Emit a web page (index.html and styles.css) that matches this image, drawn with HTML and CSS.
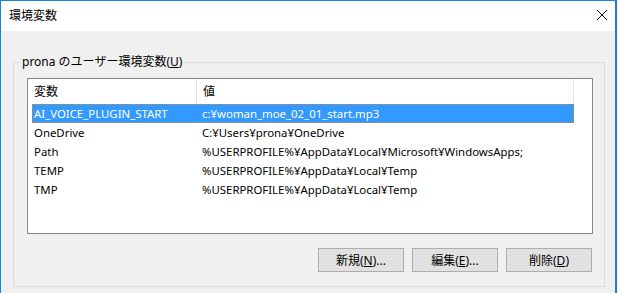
FILE: index.html
```html
<!DOCTYPE html>
<html lang="ja">
  <head>
    <meta charset="UTF-8" />
    <meta name="viewport" content="width=device-width, initial-scale=1.0" />
    <title>環境変数</title>
    <link rel="stylesheet" href="styles.css">
  </head>
  <body>
    <div class="window">
      <header class="titlebar">
        <span class="title">環境変数</span>
        <button class="close" aria-label="閉じる">
          <svg width="10" height="10" viewBox="0 0 10 10">
            <path d="M0 0 L10 10 M10 0 L0 10" stroke="#000" stroke-width="1" fill="none" />
          </svg>
        </button>
      </header>
      <main class="content">
        <fieldset class="group">
          <legend>prona のユーザー環境変数(<u>U</u>)</legend>
          <div class="listview">
            <div class="lv-header">
              <div class="hcol hcol-name">変数</div>
              <div class="hcol hcol-value">値</div>
            </div>
            <div class="lv-row selected">
              <span class="cell-name">AI_VOICE_PLUGIN_START</span>
              <span class="cell-value">c:¥woman_moe_02_01_start.mp3</span>
            </div>
            <div class="lv-row">
              <span class="cell-name">OneDrive</span>
              <span class="cell-value">C:¥Users¥prona¥OneDrive</span>
            </div>
            <div class="lv-row">
              <span class="cell-name">Path</span>
              <span class="cell-value">%USERPROFILE%¥AppData¥Local¥Microsoft¥WindowsApps;</span>
            </div>
            <div class="lv-row">
              <span class="cell-name">TEMP</span>
              <span class="cell-value">%USERPROFILE%¥AppData¥Local¥Temp</span>
            </div>
            <div class="lv-row">
              <span class="cell-name">TMP</span>
              <span class="cell-value">%USERPROFILE%¥AppData¥Local¥Temp</span>
            </div>
          </div>
          <div class="buttons">
            <button class="btn">新規(<u>N</u>)...</button>
            <button class="btn">編集(<u>E</u>)...</button>
            <button class="btn">削除(<u>D</u>)</button>
          </div>
        </fieldset>
      </main>
    </div>
  </body>
</html>
```

FILE: styles.css
```css
* {
  padding: 0;
  margin: 0;
  box-sizing: border-box;
}
html {
  font-size: 12px;
  font-family: 'Segoe UI', 'Noto Sans', 'Noto Sans CJK JP', sans-serif;
  color: #000;
  background-color: #fff;
}
body {
  overflow: hidden;
  height: 293px;
}
.window {
  width: 617px;
  height: 293px;
  border: 1px solid #1883d7;
  border-right-width: 2px;
  border-bottom: none;
  display: flex;
  flex-direction: column;
}
.titlebar {
  height: 30px;
  background-color: #fff;
  display: flex;
  justify-content: space-between;
  align-items: flex-start;
}
.title {
  line-height: 30px;
  padding-left: 8px;
}
.close {
  border: none;
  background: none;
  width: 10px;
  height: 10px;
  margin-top: 9px;
  margin-right: 8px;
  display: block;
}
.close svg {
  display: block;
}
.content {
  flex: 1;
  background-color: #f0f0f0;
  padding: 23px 10px 0 12px;
}
.group {
  border: 1px solid #dcdcdc;
  padding: 8px 11px 14px 13px;
}
.group legend {
  margin-left: -7px;
  padding: 0 2px;
  line-height: 16px;
}
u {
  text-decoration: underline;
  text-underline-offset: 1px;
}
.listview {
  height: 156px;
  border: 1px solid #828790;
  background-color: #fff;
}
.lv-header {
  height: 25px;
  display: flex;
}
.hcol {
  line-height: 25px;
  padding-left: 6px;
  border-right: 1px solid #e5e5e5;
}
.hcol-name {
  width: 169px;
}
.hcol-value {
  width: 377px;
}
.lv-row {
  height: 19px;
  width: 542px;
  margin-left: 4px;
  display: flex;
  font-size: 11.4px;
  line-height: 19px;
  white-space: nowrap;
}
.lv-row.selected {
  background-color: #3399ff;
  color: #fff;
  border: 1px dotted #c98a3c;
  line-height: 17px;
}
.cell-name {
  width: 170px;
  padding-left: 2px;
}
.lv-row.selected .cell-name {
  width: 169px;
  padding-left: 1px;
}
.buttons {
  display: flex;
  justify-content: flex-end;
  gap: 8px;
  margin-top: 14px;
  padding-right: 1px;
}
.btn {
  width: 86px;
  height: 24px;
  background-color: #e1e1e1;
  border: 1px solid #adadad;
  font: inherit;
  color: #000;
}
```
